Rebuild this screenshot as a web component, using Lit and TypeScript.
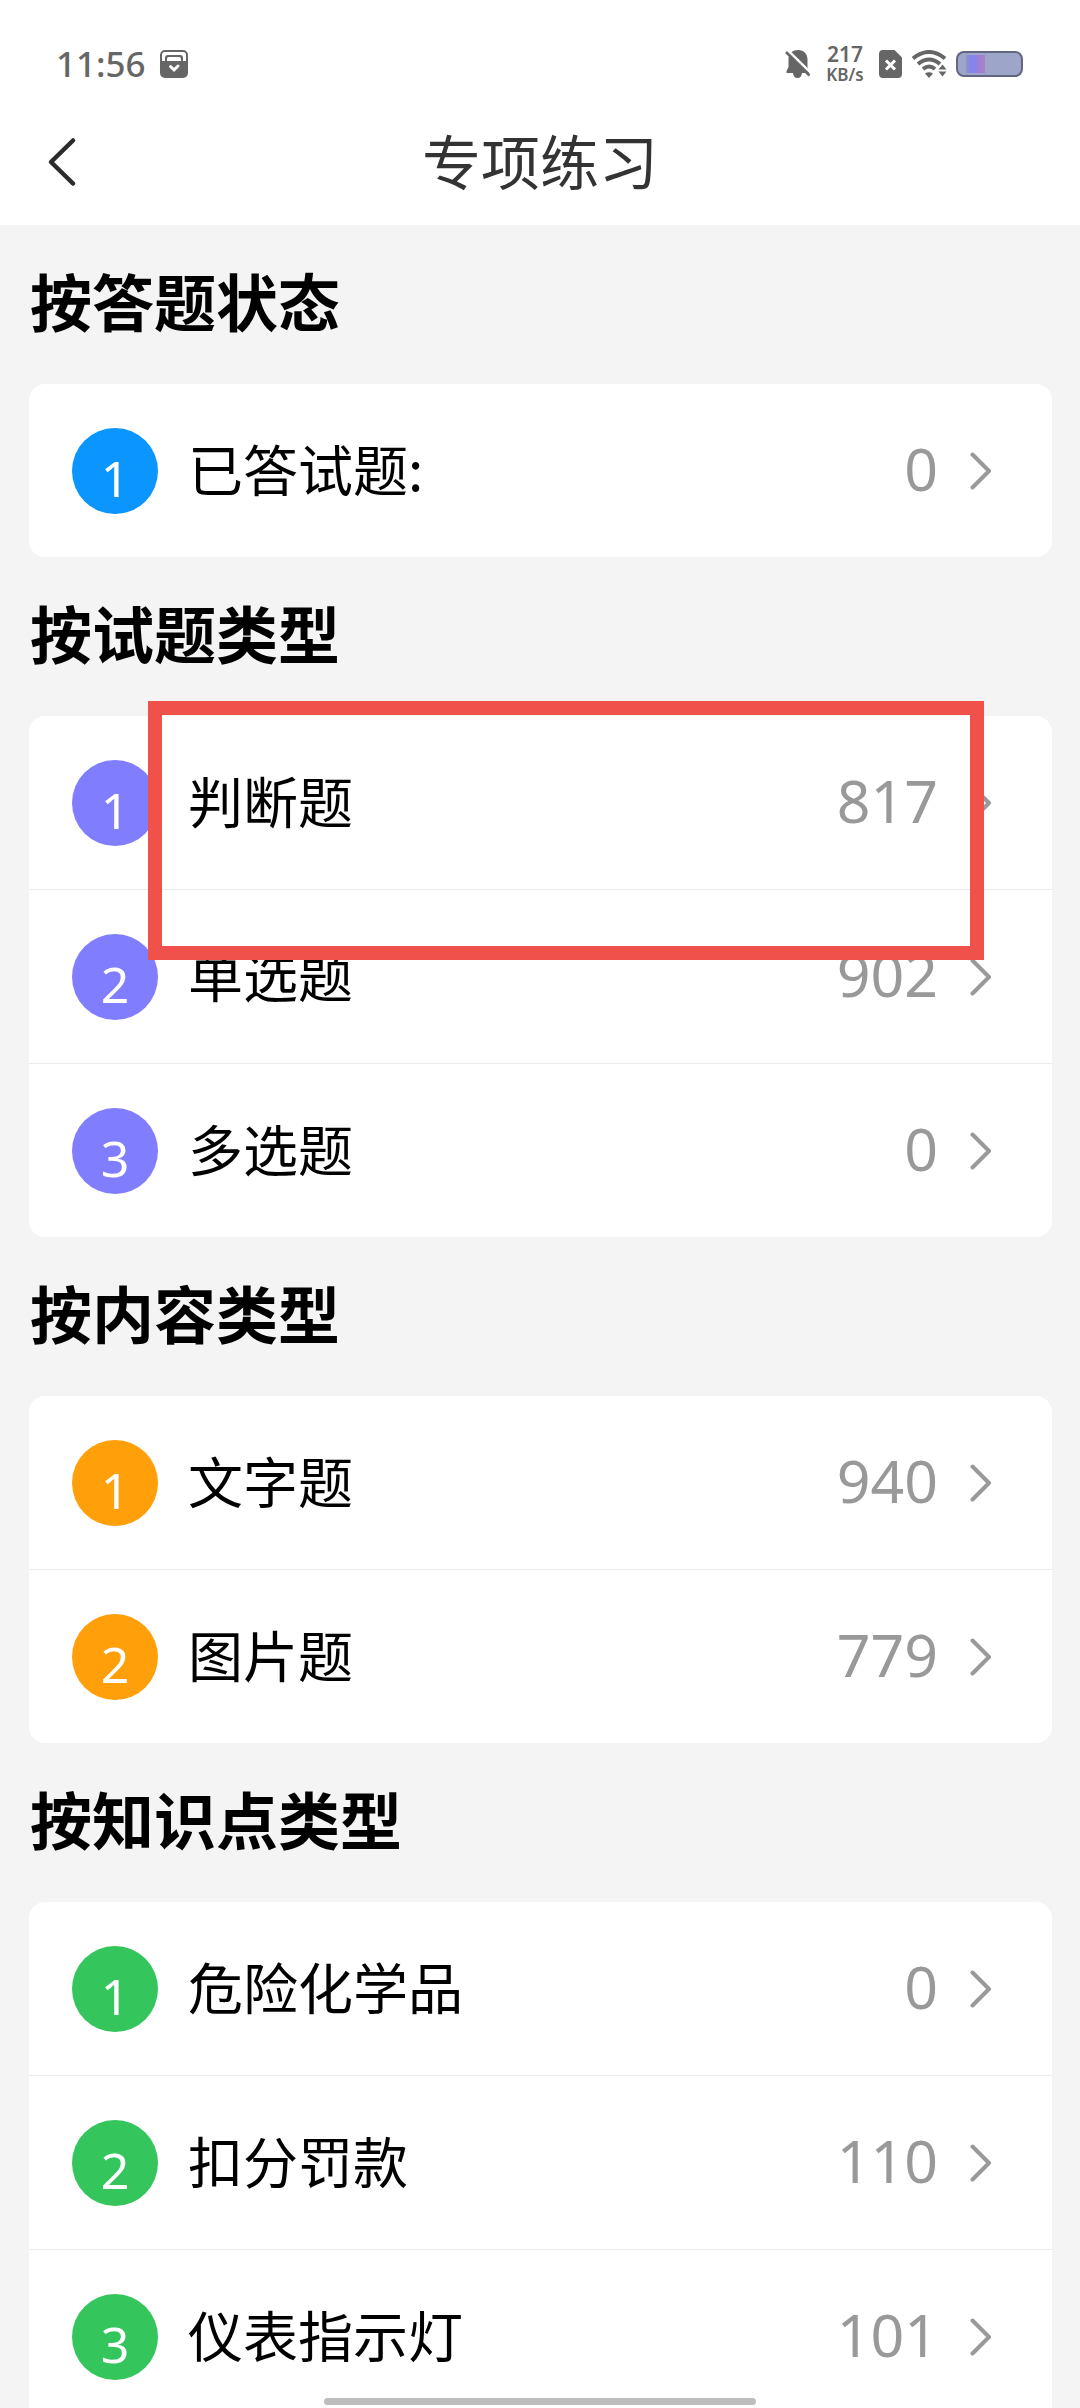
import { LitElement, html, css, nothing } from "lit";
import { customElement, property } from "lit/decorators.js";

interface Item {
  label: string;
  count: number;
}

interface Group {
  title: string;
  tone: "blue" | "violet" | "orange" | "green";
  items: Item[];
  marked?: boolean;
}

const GROUPS: Group[] = [
  { title: "按答题状态", tone: "blue", items: [{ label: "已答试题:", count: 0 }] },
  {
    title: "按试题类型",
    tone: "violet",
    marked: true,
    items: [
      { label: "判断题", count: 817 },
      { label: "单选题", count: 902 },
      { label: "多选题", count: 0 },
    ],
  },
  {
    title: "按内容类型",
    tone: "orange",
    items: [
      { label: "文字题", count: 940 },
      { label: "图片题", count: 779 },
    ],
  },
  {
    title: "按知识点类型",
    tone: "green",
    items: [
      { label: "危险化学品", count: 0 },
      { label: "扣分罚款", count: 110 },
      { label: "仪表指示灯", count: 101 },
    ],
  },
];

@customElement("status-bar")
export class StatusBar extends LitElement {
  static styles = css`
    :host {
      display: flex;
      align-items: center;
      justify-content: space-between;
      height: 56px;
      padding: 36px 57px 0 56px;
      color: #666;
      font-family: "Noto Sans", sans-serif;
    }
    .side {
      display: flex;
      align-items: center;
    }
    .left {
      gap: 14px;
    }
    .time {
      font-size: 35px;
      line-height: 40px;
      font-weight: 500;
    }
    .speed {
      display: flex;
      flex-direction: column;
      align-items: center;
      width: 40px;
      margin: 0 14px;
      font-weight: 600;
    }
    .rate {
      font-size: 21px;
      line-height: 21px;
    }
    .unit {
      font-size: 17px;
      line-height: 19px;
    }
    .wifi {
      margin: 0 9px 0 10px;
    }
    svg {
      display: block;
    }
  `;

  render() {
    return html`
      <div class="side left">
        <span class="time">11:56</span>
        <svg width="28" height="28" viewBox="0 0 28 28" fill="none" aria-hidden="true">
          <rect x="1" y="1" width="26" height="26" rx="4" stroke="#666" stroke-width="2" />
          <path d="M1 11H5V8Q5 5 8 5H20Q23 5 23 8V11H27V24Q27 27 24 27H4Q1 27 1 24Z" fill="#666" />
          <path d="M7 11V9Q7 7 9 7H19Q21 7 21 9V11Z" fill="#fff" />
          <path d="M10.500 16.500L14 20L18 16" stroke="#fff" stroke-width="3" stroke-linecap="round" />
        </svg>
      </div>
      <div class="side">
        <svg width="26" height="28" viewBox="0 0 26 28" aria-hidden="true">
          <path
            d="M13 0C19 0 22.500 4 22.500 9.500V17L24 21V23H17Q16.500 28 12.500 28T8 23H1.500V21L3.500 17V9.500C3.500 4 7 0 13 0Z"
            fill="#666"
          />
          <path d="M2.500 0L27 24" stroke="#fff" stroke-width="2.500" />
          <path d="M1 2L24.500 25.500" stroke="#666" stroke-width="2.500" />
        </svg>
        <div class="speed">
          <span class="rate">217</span>
          <span class="unit">KB/s</span>
        </div>
        <svg width="23" height="28" viewBox="0 0 23 28" aria-hidden="true">
          <path d="M4 0H15.500L23 7.500V24Q23 28 19 28H4Q0 28 0 24V4Q0 0 4 0Z" fill="#666" />
          <path d="M7 10.500L16 19.500M16 10.500L7 19.500" stroke="#fff" stroke-width="3" />
        </svg>
        <svg class="wifi" width="35" height="28" viewBox="0 0 35 28" fill="none" aria-hidden="true">
          <path d="M1 8.500Q17 -4.500 33 8.500" stroke="#666" stroke-width="4" />
          <path d="M6 14Q17 5 28 14" stroke="#666" stroke-width="4" />
          <path d="M11 19Q17 14 23 19" stroke="#666" stroke-width="4" />
          <path d="M13 23.500Q17 21 21 23.500L17 28Z" fill="#666" />
          <path d="M26.500 19.500L30.500 14.500L34.500 19.500ZM26.500 21.500L30.500 26.500L34.500 21.500Z" fill="#666" />
        </svg>
        <svg width="67" height="26" viewBox="0 0 67 26" aria-hidden="true">
          <defs>
            <linearGradient id="charge">
              <stop offset="0" stop-color="#8f97c4" />
              <stop offset="0.250" stop-color="#8683f0" />
              <stop offset="0.550" stop-color="#8b83ec" />
              <stop offset="0.650" stop-color="#a47dcf" />
              <stop offset="1" stop-color="#a884cc" />
            </linearGradient>
          </defs>
          <rect x="1" y="1" width="65" height="24" rx="7" fill="#9da5c9" stroke="#62667f" stroke-width="2" />
          <rect x="10" y="4" width="19" height="18" fill="url(#charge)" />
        </svg>
      </div>
    `;
  }
}

@customElement("topic-group")
export class TopicGroup extends LitElement {
  @property({ attribute: false }) group!: Group;

  static styles = css`
    :host {
      display: block;
    }
    .title {
      margin: 0;
      padding: 31px 1px 40px 1px;
      font-size: 62px;
      line-height: 88px;
      font-weight: 700;
      color: #000;
    }
    .card {
      position: relative;
      border-radius: 16px;
      background: #fff;
    }
    .list {
      margin: 0;
      padding: 0;
      list-style: none;
    }
    .item + .item {
      border-top: 1px solid #ebebeb;
    }
    .row {
      display: flex;
      align-items: center;
      box-sizing: border-box;
      width: 100%;
      min-height: 173px;
      margin: 0;
      padding: 0 60px 0 43px;
      border: 0;
      background: none;
      font: inherit;
      color: #000;
      text-align: left;
    }
    .badge {
      flex: none;
      box-sizing: border-box;
      width: 86px;
      height: 86px;
      padding-top: 16px;
      border-radius: 50%;
      color: #fff;
      font-family: "Noto Sans", sans-serif;
      font-size: 50px;
      line-height: 68px;
      text-align: center;
    }
    .blue {
      background: #0a95ff;
    }
    .violet {
      background: #817dff;
    }
    .orange {
      background: #ff9f0a;
    }
    .green {
      background: #34c65c;
    }
    .label {
      flex: 1;
      padding: 0 0 8px 30px;
      font-size: 55px;
      line-height: 80px;
    }
    .count {
      padding: 0 32px 6px 0;
      font-family: "Noto Sans", sans-serif;
      font-size: 59px;
      line-height: 80px;
      color: #999;
    }
    .arrow {
      flex: none;
      display: block;
    }
    .mark {
      position: absolute;
      top: -15px;
      left: 119px;
      right: 68px;
      height: 259px;
      box-sizing: border-box;
      border: 14px solid #f0524b;
      pointer-events: none;
    }
  `;

  render() {
    const { title, tone, items, marked } = this.group;
    return html`
      <section>
        <h2 class="title">${title}</h2>
        <div class="card">
          <ul class="list">
            ${items.map(
              (item, i) => html`
                <li class="item">
                  <button class="row" type="button">
                    <span class="badge ${tone}">${i + 1}</span>
                    <span class="label">${item.label}</span>
                    <span class="count">${item.count}</span>
                    <svg class="arrow" width="22" height="40" viewBox="0 0 22 40" fill="none" aria-hidden="true">
                      <path
                        d="M2.500 3.500L19 20L2.500 36.500"
                        stroke="#999"
                        stroke-width="4"
                        stroke-linecap="round"
                        stroke-linejoin="round"
                      />
                    </svg>
                  </button>
                </li>
              `
            )}
          </ul>
          ${marked ? html`<div class="mark"></div>` : nothing}
        </div>
      </section>
    `;
  }
}

@customElement("app-root")
export class AppRoot extends LitElement {
  static styles = css`
    :host {
      position: relative;
      display: flex;
      flex-direction: column;
      height: 100vh;
      overflow: hidden;
      background: #f4f4f4;
      font-family: "Noto Sans CJK SC", sans-serif;
    }
    .top {
      flex: none;
      background: #fff;
    }
    .nav {
      display: grid;
      grid-template-columns: 80px 1fr 80px;
      align-items: center;
      box-sizing: border-box;
      height: 133px;
      padding: 6px 22px 0;
    }
    .back {
      display: flex;
      justify-content: center;
      padding: 12px 0;
      border: 0;
      background: none;
    }
    .heading {
      margin: 0;
      padding-bottom: 4px;
      font-size: 59px;
      line-height: 80px;
      font-weight: 400;
      text-align: center;
      color: #333;
    }
    .content {
      flex: 1;
      min-height: 0;
      overflow-y: auto;
      scrollbar-width: none;
      padding: 0 28px 0 29px;
    }
    .home {
      position: absolute;
      bottom: 3px;
      left: 30%;
      right: 30%;
      height: 7px;
      border-radius: 4px;
      background: #bdbdbd;
    }
  `;

  render() {
    return html`
      <header class="top">
        <status-bar></status-bar>
        <nav class="nav">
          <button class="back" type="button" aria-label="返回">
            <svg width="30" height="50" viewBox="0 0 30 50" fill="none" aria-hidden="true">
              <path
                d="M26 3.500L4 25L26 46.500"
                stroke="#2b2b2b"
                stroke-width="4.500"
                stroke-linecap="round"
                stroke-linejoin="round"
              />
            </svg>
          </button>
          <h1 class="heading">专项练习</h1>
        </nav>
      </header>
      <main class="content">
        ${GROUPS.map((group) => html`<topic-group .group=${group}></topic-group>`)}
      </main>
      <div class="home"></div>
    `;
  }
}
